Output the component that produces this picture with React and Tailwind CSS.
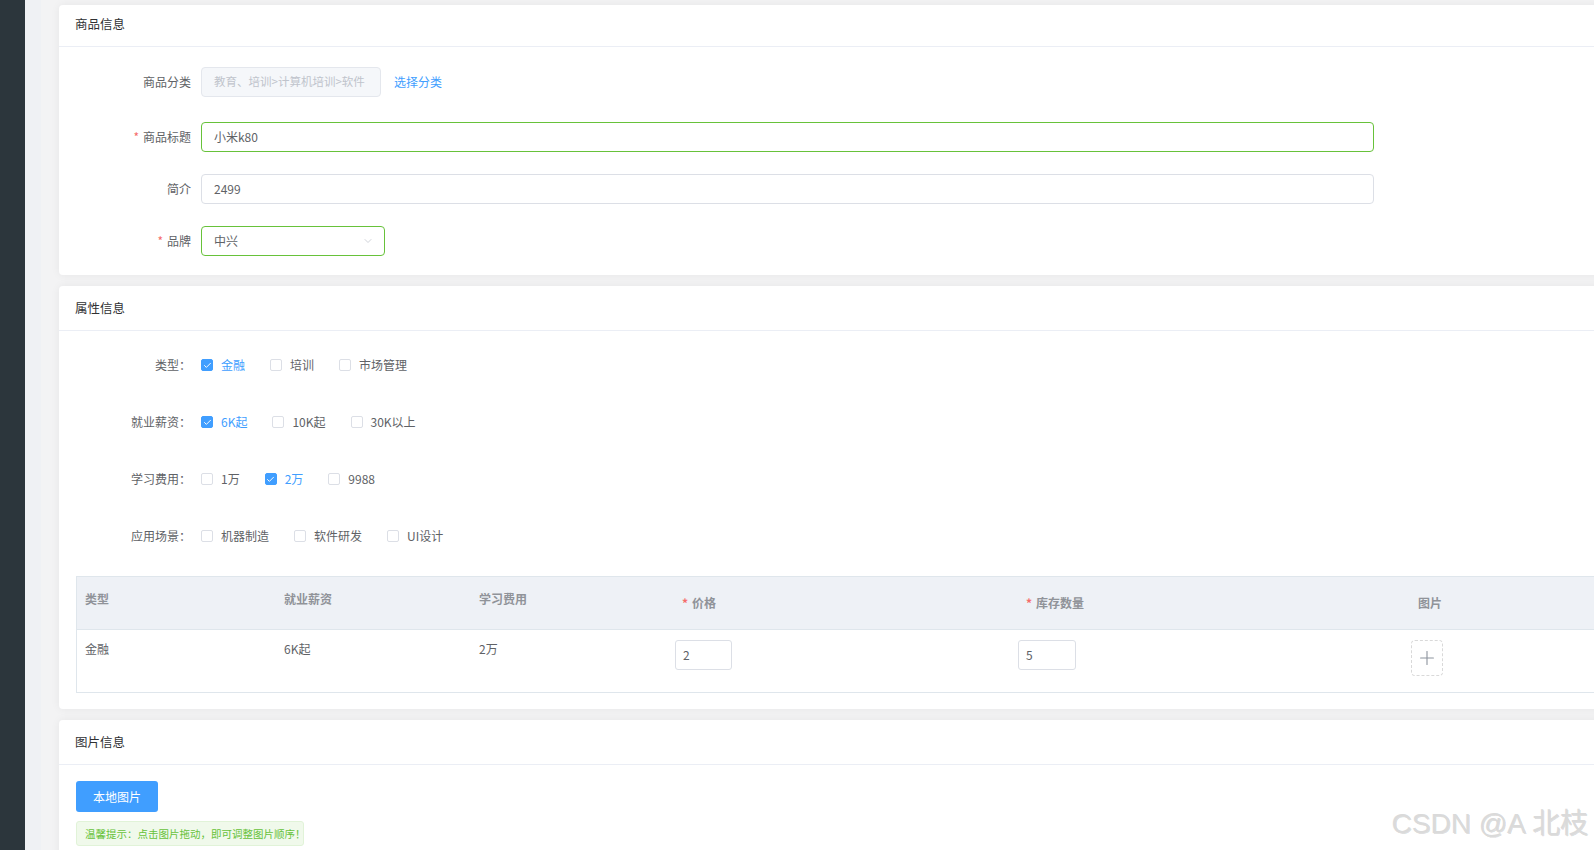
import { Check, ChevronDown, Plus } from 'lucide-react'

const attrs = [
    { label: '类型：', options: [['金融', true], ['培训', false], ['市场管理', false]] },
    { label: '就业薪资：', options: [['6K起', true], ['10K起', false], ['30K以上', false]] },
    { label: '学习费用：', options: [['1万', false], ['2万', true], ['9988', false]] },
    { label: '应用场景：', options: [['机器制造', false], ['软件研发', false], ['UI设计', false]] },
]

function Card({ title, headerClass, children }) {
    return (
        <div className="w-[1580px] shrink-0 bg-white rounded-[4px] shadow-[0_0_10px_rgba(0,0,0,0.06)]">
            <div className={`${headerClass} flex items-center pl-4 text-[12.5px] text-[#303133] border-b border-[#ebeef5]`}>
                {title}
            </div>
            {children}
        </div>
    )
}

function FormRow({ label, required, className = '', children }) {
    return (
        <div className={`flex items-center ${className}`}>
            <div className="w-[142px] pr-[10px] text-right text-[12px] text-[#606266]">
                {required && <span className="text-[#f56c6c] mr-[4px]">*</span>}
                {label}
            </div>
            {children}
        </div>
    )
}

function CheckBox({ text, checked }) {
    return (
        <label className="flex items-center mr-[25px]">
            {checked ? (
                <span className="w-[12px] h-[12px] rounded-[2px] bg-[#409eff] border border-[#409eff] flex items-center justify-center">
                    <Check size={9} strokeWidth={2.5} className="text-white" />
                </span>
            ) : (
                <span className="w-[12px] h-[12px] rounded-[2px] bg-white border border-[#dcdfe6]" />
            )}
            <span className={`pl-[8px] text-[12px] ${checked ? 'text-[#409eff]' : 'text-[#606266]'}`}>{text}</span>
        </label>
    )
}

export default function App() {
    return (
        <div className="relative flex h-[850px] w-[1594px] overflow-hidden font-['Noto_Sans_CJK_SC',sans-serif]">
            <div className="w-[25px] shrink-0 bg-[#2c363c]" />
            <div className="w-[16px] shrink-0 bg-[#eff1f4]" />

            <div className="flex-1 bg-[#f3f3f4] pl-[18px] pt-[5px] flex flex-col gap-[11px] overflow-hidden">
                {/* 商品信息 */}
                <Card title="商品信息" headerClass="h-[42px] pb-[2px]">
                    <div className="pt-[20px] pb-[19px]">
                        <FormRow label="商品分类" className="mb-[25px]">
                            <div className="w-[180px] h-[30px] rounded-[4px] bg-[#f5f7fa] border border-[#e4e7ed] flex items-center pl-[12px] text-[11.5px] text-[#c0c4cc] whitespace-nowrap overflow-hidden">
                                教育、培训&gt;计算机培训&gt;软件
                            </div>
                            <span className="ml-[13px] text-[12px] text-[#409eff]">选择分类</span>
                        </FormRow>
                        <FormRow label="商品标题" required className="mb-[22px]">
                            <div className="w-[1173px] h-[30px] rounded-[4px] border border-[#67c23a] flex items-center pl-[12px] text-[12px] text-[#606266]">
                                小米k80
                            </div>
                        </FormRow>
                        <FormRow label="简介" className="mb-[22px]">
                            <div className="w-[1173px] h-[30px] rounded-[4px] border border-[#dcdfe6] flex items-center pl-[12px] text-[12px] text-[#606266]">
                                2499
                            </div>
                        </FormRow>
                        <FormRow label="品牌" required>
                            <div className="w-[184px] h-[30px] rounded-[4px] border border-[#67c23a] flex items-center justify-between pl-[12px] pr-[10px] text-[12px] text-[#606266]">
                                中兴
                                <ChevronDown size={12} strokeWidth={1.5} className="text-[#c0c4cc]" />
                            </div>
                        </FormRow>
                    </div>
                </Card>

                {/* 属性信息 */}
                <Card title="属性信息" headerClass="h-[45px]">
                    <div className="pt-[18px] pb-[16px]">
                        <div className="flex flex-col gap-[25px]">
                            {attrs.map((a) => (
                                <div key={a.label} className="flex items-center h-[32px]">
                                    <div className="w-[142px] pr-[10px] text-right text-[12px] text-[#606266]">{a.label}</div>
                                    {a.options.map(([t, c]) => (
                                        <CheckBox key={t} text={t} checked={c} />
                                    ))}
                                </div>
                            ))}
                        </div>

                        {/* SKU table */}
                        <div className="mt-[24px] ml-[17px] border border-[#dfe6ec] text-[12px]">
                            <div className="flex h-[53px] bg-[#eef1f6] border-b border-[#dfe6ec] font-bold text-[#909399]">
                                <div className="w-[199px] pl-[8px] pt-[13px]">类型</div>
                                <div className="w-[195px] pl-[8px] pt-[13px]">就业薪资</div>
                                <div className="w-[195px] pl-[8px] pt-[13px]">学习费用</div>
                                <div className="w-[343px] pl-[16px] pt-[17px]"><span className="text-[#f56c6c] mr-[4px]">*</span>价格</div>
                                <div className="w-[343px] pl-[17px] pt-[17px]"><span className="text-[#f56c6c] mr-[4px]">*</span>库存数量</div>
                                <div className="w-[150px] pt-[17px] text-center pl-[6px]">图片</div>
                            </div>
                            <div className="flex h-[62px] text-[#606266]">
                                <div className="w-[199px] pl-[8px] pt-[10px]">金融</div>
                                <div className="w-[195px] pl-[8px] pt-[10px]">6K起</div>
                                <div className="w-[195px] pl-[8px] pt-[10px]">2万</div>
                                <div className="w-[343px] pl-[9px] pt-[10px]">
                                    <div className="w-[57px] h-[30px] rounded-[3px] border border-[#dcdfe6] flex items-center pl-[7px]">2</div>
                                </div>
                                <div className="w-[343px] pl-[9px] pt-[10px]">
                                    <div className="w-[58px] h-[30px] rounded-[3px] border border-[#dcdfe6] flex items-center pl-[7px]">5</div>
                                </div>
                                <div className="w-[150px] pt-[10px] flex justify-center">
                                    <div className="w-[32px] h-[36px] rounded-[4px] border border-dashed border-[#d9d9d9] flex items-center justify-center">
                                        <Plus size={22} strokeWidth={1.2} className="text-[#8c939d]" />
                                    </div>
                                </div>
                            </div>
                        </div>
                    </div>
                </Card>

                {/* 图片信息 */}
                <Card title="图片信息" headerClass="h-[45px]">
                    <div className="pt-[16px] pl-[17px] pb-[60px]">
                        <button className="w-[82px] h-[31px] rounded-[3px] bg-[#409eff] text-white text-[12px]">本地图片</button>
                        <div className="mt-[9px] w-[228px] h-[25px] rounded-[3px] bg-[#f0f9eb] border border-[#e1f3d8] flex items-center pl-[8px] text-[10.5px] text-[#67c23a] whitespace-nowrap">
                            温馨提示：点击图片拖动，即可调整图片顺序！
                        </div>
                    </div>
                </Card>
            </div>

            {/* watermark */}
            <div className="absolute right-[6px] bottom-[12px] text-[28px] leading-none font-normal text-[#dadada] [text-shadow:1px_1px_0_rgba(0,0,0,0.15)] font-['Liberation_Sans','Noto_Sans_CJK_SC',sans-serif]">
                CSDN @A 北枝
            </div>
        </div>
    )
}
